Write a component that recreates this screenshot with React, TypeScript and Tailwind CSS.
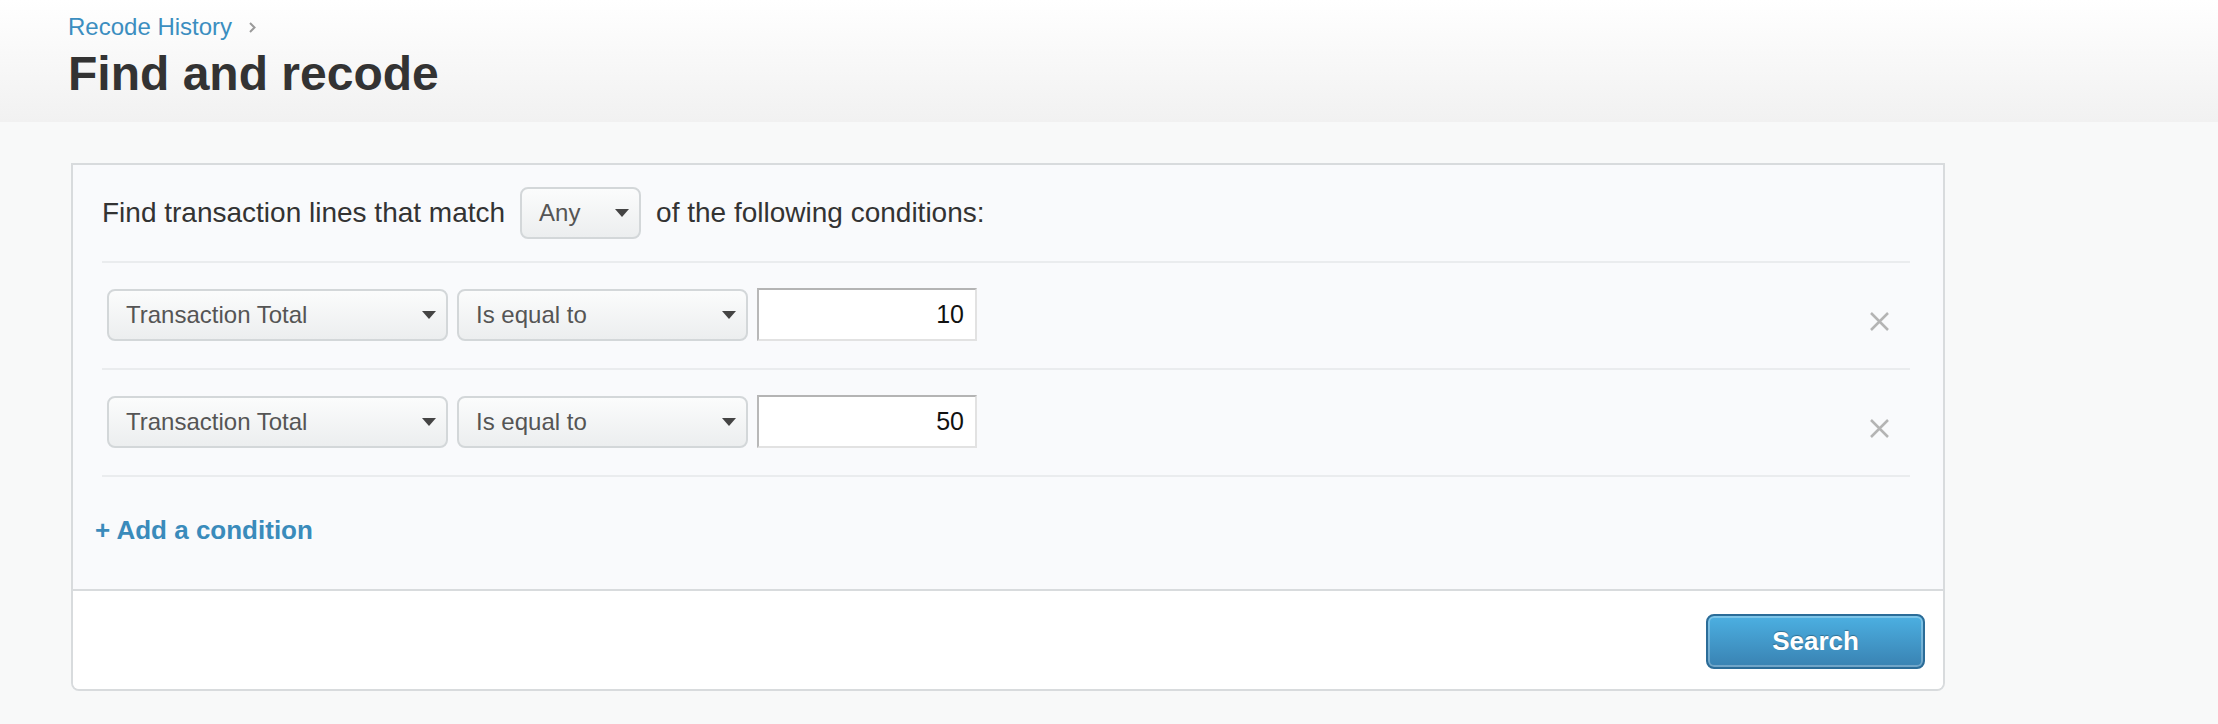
import React from "react";

const Caret = () => (
  <svg width="14" height="8" viewBox="0 0 14 8" className="shrink-0">
    <path d="M0 0 L14 0 L7 8 Z" fill="#444" />
  </svg>
);

interface SelectBoxProps {
  label: string;
  width: string;
}

const SelectBox: React.FC<SelectBoxProps> = ({ label, width }) => (
  <div
    className={`${width} h-[52px] flex items-center justify-between pl-[17px] pr-[10px] rounded-[8px] border-2 border-[#d3d7d9] bg-gradient-to-b from-[#fbfcfc] to-[#eceeef] text-[24px] text-[#555]`}
  >
    <span>{label}</span>
    <Caret />
  </div>
);

const RemoveIcon = () => (
  <svg width="21" height="21" viewBox="0 0 21 21">
    <path d="M2 2 L19 19 M19 2 L2 19" stroke="#b4b4b4" strokeWidth="2.5" />
  </svg>
);

const conditions = [
  { field: "Transaction Total", op: "Is equal to", value: "10" },
  { field: "Transaction Total", op: "Is equal to", value: "50" },
];

export default function App() {
  return (
    <div className="min-h-[724px] bg-[#f8f9f9] font-['Liberation_Sans',Arial,sans-serif]">
      {/* Header */}
      <div className="h-[122px] pl-[68px] pt-[12px] bg-gradient-to-b from-white to-[#f1f1f1]">
        <div className="flex items-center gap-[17px] h-[30px]">
          <a className="text-[24px] leading-[30px] text-[#3b8ec0]">Recode History</a>
          <svg width="7" height="11" viewBox="0 0 7 11">
            <path d="M1 1 L5.5 5.5 L1 10" stroke="#9a9a9a" strokeWidth="2" fill="none" />
          </svg>
        </div>
        <h1 className="mt-[4px] text-[48px] leading-[56px] font-bold text-[#333]">Find and recode</h1>
      </div>

      {/* Card */}
      <div className="ml-[71px] mt-[41px] w-[1874px] border-2 border-[#d8dbdd] rounded-b-[8px] overflow-hidden">
        <div className="bg-[#f9fafc]">
          <div className="pl-[29px] pr-[33px]">
            <div className="h-[98px] flex items-center gap-[15px] border-b-2 border-[#eaecee] text-[28px] text-[#333]">
              <span>Find transaction lines that match</span>
              <SelectBox label="Any" width="w-[121px]" />
              <span>of the following conditions:</span>
            </div>

            {conditions.map((c, i) => (
              <div key={i} className="flex items-center pt-[25px] pb-[27px] pl-[5px] border-b-2 border-[#eaecee]">
                <div className="flex items-center gap-[9px]">
                  <SelectBox label={c.field} width="w-[341px]" />
                  <SelectBox label={c.op} width="w-[291px]" />
                  <div className="w-[220px] h-[53px] flex items-center justify-end pr-[11px] bg-white border-2 border-t-[#b4b4b4] border-l-[#b8b8b8] border-r-[#e2e2e2] border-b-[#e2e2e2] text-[25px] text-[#111]">
                    {c.value}
                  </div>
                </div>
                <div className="ml-auto mr-[13px] mt-[14px] w-[36px] h-[36px] flex items-center justify-center">
                  <RemoveIcon />
                </div>
              </div>
            ))}
          </div>

          <div className="pl-[22px] pt-[38px] pb-[43px]">
            <a className="text-[26px] leading-[30px] font-bold text-[#3a8bbb]">+ Add a condition</a>
          </div>
        </div>

        {/* Footer */}
        <div className="bg-white border-t-2 border-[#d8dbdd] flex justify-end pt-[23px] pb-[20px] pr-[18px]">
          <button className="w-[219px] h-[55px] rounded-[8px] border-2 border-[#2b6c98] bg-gradient-to-b from-[#4cb0e2] to-[#3982b2] shadow-[inset_0_0_0_2px_rgba(255,255,255,0.28)] text-[26px] font-bold text-white [text-shadow:0_-1px_1px_rgba(0,0,0,0.3)]">
            Search
          </button>
        </div>
      </div>
    </div>
  );
}
